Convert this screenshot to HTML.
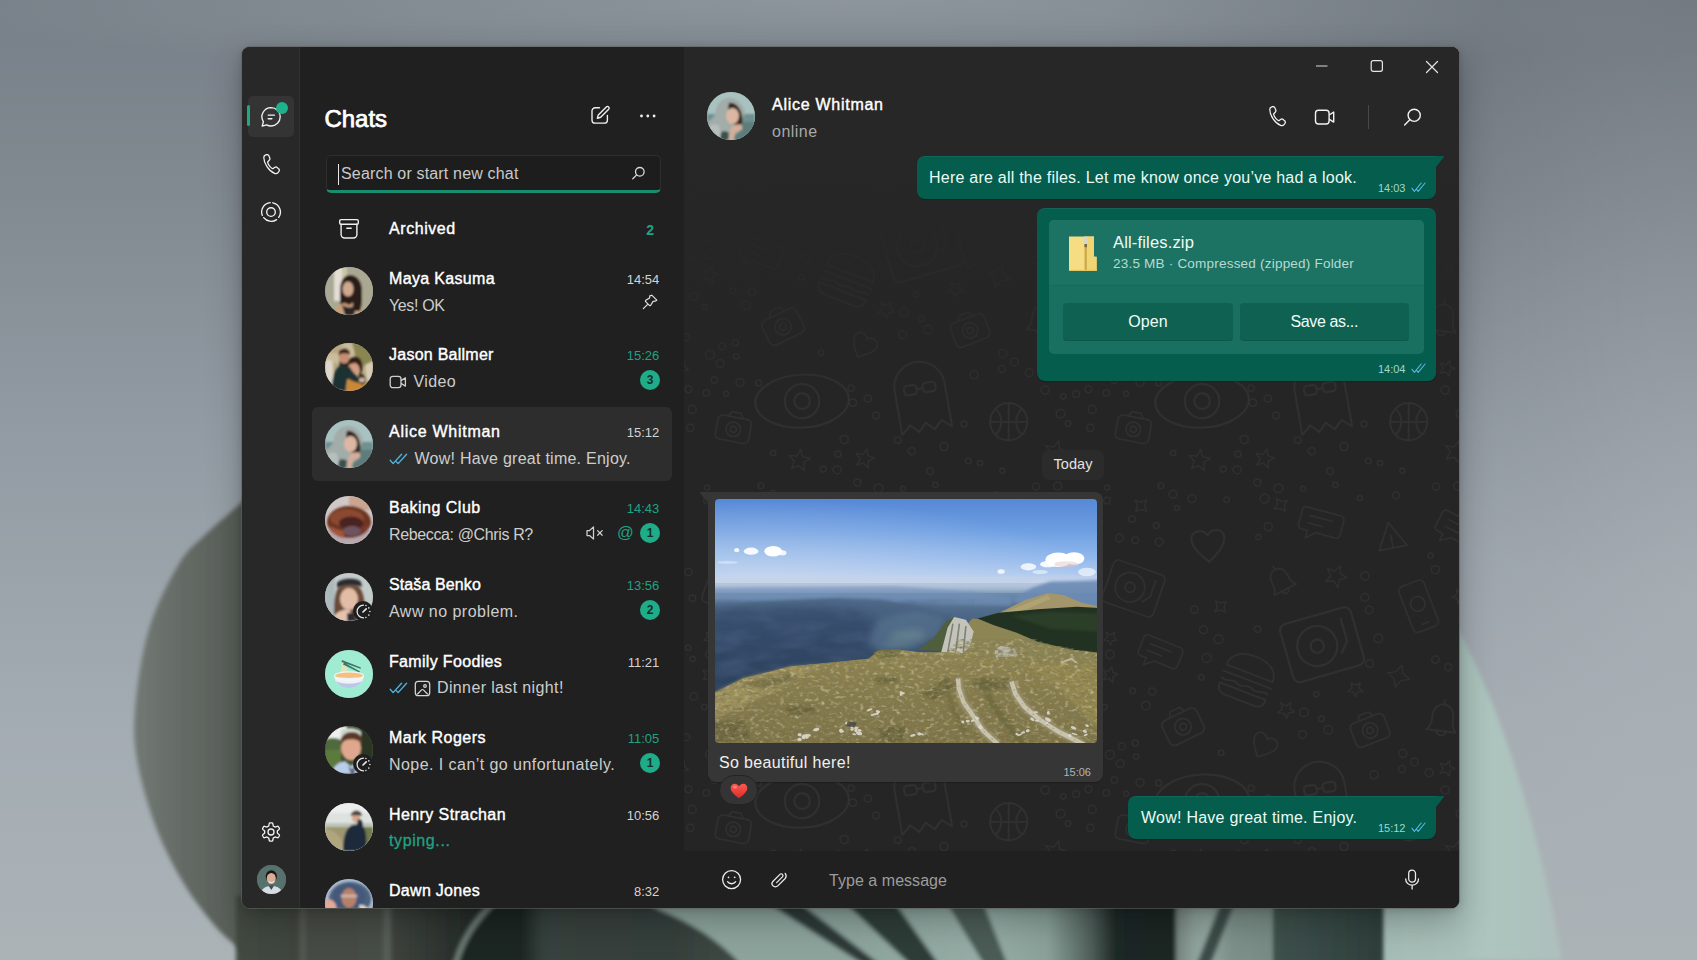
<!DOCTYPE html>
<html>
<head>
<meta charset="utf-8">
<title>WhatsApp</title>
<style>
*{box-sizing:border-box;margin:0;padding:0}
html,body{width:1697px;height:960px;overflow:hidden;background:#868e95;font-family:"Liberation Sans",sans-serif;}
body{position:relative}
#wall{position:absolute;left:0;top:0;width:1697px;height:960px}
#win{position:absolute;left:242px;top:47px;width:1217px;height:861px;border-radius:8px;overflow:hidden;background:#202020;box-shadow:0 0 0 1px rgba(96,100,97,.6),0 14px 34px rgba(0,0,0,.26),0 2px 10px rgba(0,0,0,.16)}
.abs{position:absolute}
/* nav rail */
#rail{position:absolute;left:0;top:0;width:58px;height:861px;background:#282828;border-right:1px solid #313131}
#rail .sel{position:absolute;left:6px;top:49px;width:46px;height:41px;border-radius:5px;background:#343434}
#rail .bar{position:absolute;left:5px;top:58px;width:3px;height:21px;border-radius:2px;background:#1fa884}
#rail .dot{position:absolute;left:34px;top:55px;width:12px;height:12px;border-radius:50%;background:#1fb08c}
#rail svg{position:absolute}
/* chat list */
#list{position:absolute;left:58px;top:0;width:384px;height:861px;background:#202020}
#list h1{position:absolute;left:24.500px;top:56.500px;font-size:24px;line-height:30px;font-weight:normal;-webkit-text-stroke:.75px #fff;color:#fff}
#search{position:absolute;left:26px;top:108px;width:334.500px;height:38px;border-radius:5px;background:#1d1d1d;border:1px solid #2e2e2e;border-bottom:3px solid #1a8d71;overflow:hidden}
#search .ph{position:absolute;left:14px;top:7px;font-size:16px;line-height:22px;color:#c9c9c9}
#search .caret{position:absolute;left:11px;top:8px;width:1px;height:21px;background:#e8e8e8}
.row{position:absolute;left:0;width:384px;height:74px}
.row.on::before{content:"";position:absolute;left:12px;top:0;width:360px;height:74px;border-radius:6px;background:#2d2d2d}
.av{position:absolute;left:25px;top:13px;width:48px;height:48px;border-radius:50%;overflow:hidden;background:#777}
.av svg{display:block;width:48px;height:48px}
.nm{position:absolute;left:89px;top:14px;font-size:16px;line-height:22px;font-weight:normal;-webkit-text-stroke:.4px #fff;letter-spacing:.55px;color:#fff;white-space:nowrap}
.ms{position:absolute;left:89px;top:40.800px;font-size:16px;line-height:22px;color:#cdcdcd;white-space:nowrap}
.ms .g{-webkit-text-stroke:.3px #1fa383}
.tm{position:absolute;right:24.700px;top:16px;font-size:13px;line-height:20px;color:#d4d4d4;white-space:nowrap}
.tm.g,.g{color:#1fa383}
.bd{position:absolute;left:340px;top:40px;width:20px;height:20px;border-radius:50%;background:#1fad89;color:#14302a;font-size:12px;line-height:20px;font-weight:bold;text-align:center}
/* chat pane */
#pane{position:absolute;left:442px;top:0;width:775px;height:861px;background:#262626}
#hdr{position:absolute;left:0;top:0;width:775px;height:105px;background:#272727}
#comp{position:absolute;left:0;top:804px;width:775px;height:57px;background:#202020}
.out{position:absolute;background:#045d4d;box-shadow:inset 0 1px 0 rgba(255,255,255,.06),0 1px 1px rgba(0,0,0,.2);border-radius:8px;color:#eafaf5}
.in{position:absolute;background:#363636;border-radius:8px;color:#f0f0f0}
.meta{position:absolute;font-size:11px;line-height:14px;letter-spacing:-.05px;color:#a3d5c8;white-space:nowrap}
.ms svg{position:absolute;left:0}
.ms .chk{top:5px;left:0}
.ms .vid{top:4px;left:0}
.ms .img{top:3px;left:25px}
.tmr{position:absolute;left:53px;top:41.200px;width:20px;height:20px;border-radius:50%;background:#1e1e1e}
.tmr svg{position:absolute;left:1.500px;top:1.500px}
</style>
</head>
<body>
<svg id="wall" width="1697" height="960" viewBox="0 0 1697 960">
<defs>
<linearGradient id="wg" x1="0" y1="0" x2="0" y2="1"><stop offset="0" stop-color="#777f88"/><stop offset=".2" stop-color="#818991"/><stop offset=".45" stop-color="#929ba3"/><stop offset=".75" stop-color="#a3acb2"/><stop offset="1" stop-color="#abb3b7"/></linearGradient>
<radialGradient id="wtop" cx=".5" cy="0" r=".55" gradientTransform="matrix(1 0 0 .35 0 0)"><stop offset="0" stop-color="#969ea4" stop-opacity=".75"/><stop offset="1" stop-color="#969ea4" stop-opacity="0"/></radialGradient>
<radialGradient id="wr" cx="1" cy="0" r="1" gradientTransform="matrix(1 0 0 .62 0 0)"><stop offset="0" stop-color="#5c636b" stop-opacity=".5"/><stop offset="1" stop-color="#5c636b" stop-opacity="0"/></radialGradient><radialGradient id="wr2" cx="1" cy=".62" r=".8"><stop offset="0" stop-color="#aeb3b8" stop-opacity=".55"/><stop offset="1" stop-color="#aeb3b8" stop-opacity="0"/></radialGradient>
<linearGradient id="pl" x1="0" y1="0" x2="1" y2="0"><stop offset="0" stop-color="#727974"/><stop offset=".3" stop-color="#626862"/><stop offset=".62" stop-color="#535952"/><stop offset="1" stop-color="#424841"/></linearGradient>
<linearGradient id="pr" x1="0" y1="0" x2="1" y2="0"><stop offset="0" stop-color="#9db6af"/><stop offset=".6" stop-color="#adc5be"/><stop offset="1" stop-color="#aebfbc"/></linearGradient>
<linearGradient id="btA" gradientUnits="userSpaceOnUse" x1="236" y1="0" x2="1466" y2="0">
<stop offset="0" stop-color="#434941"/><stop offset=".05" stop-color="#3f453e"/><stop offset=".054" stop-color="#585f57"/><stop offset=".058" stop-color="#464c45"/><stop offset=".118" stop-color="#474d46"/><stop offset=".123" stop-color="#5f665e"/><stop offset=".128" stop-color="#3d433d"/><stop offset=".18" stop-color="#2a302d"/><stop offset=".23" stop-color="#1c2421"/><stop offset=".25" stop-color="#36423e"/>
<stop offset=".33" stop-color="#3f4b47"/><stop offset=".345" stop-color="#8ea59e"/><stop offset=".5" stop-color="#8da49d"/><stop offset=".61" stop-color="#95ada6"/><stop offset=".66" stop-color="#8aa19a"/><stop offset=".695" stop-color="#50605b"/><stop offset=".715" stop-color="#1f2926"/><stop offset=".763" stop-color="#1c2623"/><stop offset=".765" stop-color="#76867f"/><stop offset=".78" stop-color="#8fa39c"/><stop offset=".79" stop-color="#93a8a0"/><stop offset=".81" stop-color="#7d918a"/><stop offset=".842" stop-color="#788c85"/><stop offset=".846" stop-color="#3d504b"/><stop offset=".93" stop-color="#2f3f3b"/><stop offset=".934" stop-color="#a5bdb6"/><stop offset="1" stop-color="#a8c0b9"/></linearGradient>
<linearGradient id="btD" x1="0" y1="0" x2="1" y2="0"><stop offset="0" stop-color="#38423e"/><stop offset=".6" stop-color="#36403c"/><stop offset="1" stop-color="#3f4a46"/></linearGradient>
<linearGradient id="btG" x1="0" y1="0" x2="1" y2="0"><stop offset="0" stop-color="#3f524d"/><stop offset="1" stop-color="#2e3f3b"/></linearGradient>
<filter id="bl" x="-5%" y="-5%" width="110%" height="110%"><feGaussianBlur stdDeviation="2.2"/></filter>
</defs>
<rect width="1697" height="960" fill="url(#wg)"/>
<rect width="1697" height="400" fill="url(#wtop)"/>
<rect x="1100" width="597" height="960" fill="url(#wr)"/><rect x="1300" width="397" height="960" fill="url(#wr2)"/>

<path filter="url(#bl)" d="M1440 600 C1480 660 1530 780 1562 960 L1380 960 L1380 600Z" fill="url(#pr)"/>

<path filter="url(#bl)" d="M275.0 470.0C269.5 475.3 253.7 491.2 242.0 502.0C230.3 512.8 215.6 524.6 205.0 535.0C194.4 545.4 187.9 548.8 178.6 564.5C169.3 580.2 156.3 604.8 149.0 629.0C141.7 653.2 136.8 687.3 135.0 710.0C133.2 732.7 134.3 745.0 138.0 765.0C141.7 785.0 149.3 810.2 157.0 830.0C164.7 849.8 174.2 867.8 184.0 884.0C193.8 900.2 206.3 915.8 216.0 927.0C225.7 938.2 234.3 943.5 242.0 951.0C249.7 958.5 258.7 968.5 262.0 972.0L330 972L330 470Z" fill="url(#pl)"/>

<g filter="url(#bl)">
<rect x="236" y="896" width="1230" height="70" fill="url(#btA)"/>
<path d="M640 896 L655 908 C690 922 720 940 742 966 L560 966 L560 896Z" fill="url(#btD)"/>
<path d="M455 966 C462 940 474 922 496 900 L520 900 L520 966Z" fill="#1d2522"/>
<path d="M455 966 C462 940 474 922 494 902" stroke="#71807a" stroke-width="5" fill="none"/>
<path d="M763 900L796 900L882 966L866 966Z" fill="#2d3b37"/>
<path d="M842 900L893 900L940 966L912 966Z" fill="#2e3c39"/>
<path d="M945 900L982 900L1008 966L985 966Z" fill="#4b5c57"/>
<path d="M1236 900L1222 900L1196 966L1210 966Z" fill="#3c4d48"/>
</g>
<path filter="url(#bl)" d="M1382 900 L1382 966 L1275 966 L1275 900Z" fill="url(#btG)"/>
</svg>


<div id="win">
<div id="rail">
<div class="sel"></div><div class="bar"></div>
<svg style="left:18px;top:59px" width="22" height="22" viewBox="0 0 22 22" fill="none" stroke="#f2f2f2" stroke-width="1.35" stroke-linecap="round" stroke-linejoin="round"><path d="M11 1.6a9.2 9.2 0 0 1 0 18.4c-1.6 0-3.1-.4-4.4-1.1L2.2 20.1l1.2-4.3A9.2 9.2 0 0 1 11 1.600z"/><path d="M8.200 9.1h6.300M8.200 12.700h3.700"/></svg>
<div class="dot"></div>
<svg style="left:19.800px;top:107px" width="20" height="22" viewBox="0 0 20 22" fill="none" stroke="#f2f2f2" stroke-width="1.35" stroke-linecap="round" stroke-linejoin="round"><path d="M5.300 1.700l1.300-.4c1-.3 2 .2 2.500 1.200l.9 2.200c.4.900.2 1.900-.5 2.600L8 8.800c-.2.200-.3.500-.2.800.3 1.300 1 2.600 2.100 3.900 1 1.300 2.100 2.200 3.100 2.700.3.100.6.100.8-.1l1.700-1.200c.8-.5 1.800-.5 2.500.1l1.600 1.500c.8.700.9 1.900.3 2.800l-.7 1c-.9 1.200-2.500 1.700-3.900 1.100-3-1.200-5.700-3.600-8.100-7.100C4.800 10.800 3.600 7.400 3.700 4.100c0-1.100.7-2 1.600-2.400z" transform="translate(-1.600 -.5) scale(.93)"/></svg>
<svg style="left:18px;top:154px" width="22" height="22" viewBox="0 0 22 22" fill="none" stroke="#f2f2f2" stroke-width="1.35" stroke-linecap="round"><circle cx="11" cy="11" r="4.300"/><path d="M12.800 1.800a9.400 9.400 0 0 1 5.900 14.600M16.600 18.600a9.400 9.400 0 0 1-12.900-2M2.300 14.400A9.400 9.400 0 0 1 10.200 1.600"/></svg>
<svg style="left:18px;top:773.600px" width="22" height="22" viewBox="0 0 22 22" fill="none" stroke="#f2f2f2" stroke-width="1.300" stroke-linejoin="round"><circle cx="11" cy="11" r="3"/><path d="M11.00 1.90L11.48 1.91L11.95 1.95L12.42 2.01L12.78 2.64L13.01 3.51L13.15 4.38L13.29 5.03L13.60 5.15L13.91 5.30L14.20 5.46L14.49 5.63L14.76 5.82L15.03 6.03L15.66 5.83L16.48 5.52L17.35 5.28L18.07 5.27L18.36 5.65L18.63 6.04L18.88 6.45L19.11 6.87L19.31 7.30L19.50 7.74L19.12 8.36L18.49 8.99L17.81 9.55L17.32 10.00L17.36 10.33L17.39 10.67L17.40 11.00L17.39 11.33L17.36 11.67L17.32 12.00L17.81 12.45L18.49 13.01L19.12 13.64L19.50 14.26L19.31 14.70L19.11 15.13L18.88 15.55L18.63 15.96L18.36 16.35L18.07 16.73L17.35 16.72L16.48 16.48L15.66 16.17L15.03 15.97L14.76 16.18L14.49 16.37L14.20 16.54L13.91 16.70L13.60 16.85L13.29 16.97L13.15 17.62L13.01 18.49L12.78 19.36L12.42 19.99L11.95 20.05L11.48 20.09L11.00 20.10L10.52 20.09L10.05 20.05L9.58 19.99L9.22 19.36L8.99 18.49L8.85 17.62L8.71 16.97L8.40 16.85L8.09 16.70L7.80 16.54L7.51 16.37L7.24 16.18L6.97 15.97L6.34 16.17L5.52 16.48L4.65 16.72L3.93 16.73L3.64 16.35L3.37 15.96L3.12 15.55L2.89 15.13L2.69 14.70L2.50 14.26L2.88 13.64L3.51 13.01L4.19 12.45L4.68 12.00L4.64 11.67L4.61 11.33L4.60 11.00L4.61 10.67L4.64 10.33L4.68 10.00L4.19 9.55L3.51 8.99L2.88 8.36L2.50 7.74L2.69 7.30L2.89 6.87L3.12 6.45L3.37 6.04L3.64 5.65L3.93 5.27L4.65 5.28L5.52 5.52L6.34 5.83L6.97 6.03L7.24 5.82L7.51 5.63L7.80 5.46L8.09 5.30L8.40 5.15L8.71 5.03L8.85 4.38L8.99 3.51L9.22 2.64L9.58 2.01L10.05 1.95L10.52 1.91z"/></svg>
<div class="abs" style="left:14.500px;top:818px;width:29px;height:29px;border-radius:50%;overflow:hidden;background:#56706b"><svg style="left:0;top:0" width="29" height="29" viewBox="0 0 29 29"><defs><filter id="fp" x="-10%" y="-10%" width="120%" height="120%"><feGaussianBlur stdDeviation=".5"/></filter></defs><rect width="29" height="29" fill="#57716c"/><g filter="url(#fp)"><ellipse cx="14.300" cy="11.500" rx="5.600" ry="6.200" fill="#1d1816"/><ellipse cx="14.300" cy="13.500" rx="4.500" ry="5.600" fill="#d8ae96"/><path d="M3.500 29c1-5.500 5-8 11-8s10 2.500 11 8z" fill="#d5dde2"/><path d="M11.500 20.500l2.800 4.500 2.800-4.500z" fill="#454954"/><path d="M11.800 16.500c1.500 1.500 3.500 1.500 5 0" stroke="#fff" stroke-width=".9" fill="none"/></g></svg></div>

</div>

<div id="list">
<h1><span style="letter-spacing:-0.041px">Chats</span></h1>
<svg class="abs" style="left:289px;top:57px" width="22" height="22" viewBox="0 0 22 22" fill="none" stroke="#f0f0f0" stroke-width="1.400" stroke-linecap="round" stroke-linejoin="round"><path d="M10.500 3.700H6.200A3.200 3.200 0 0 0 3 6.900v9a3.200 3.200 0 0 0 3.200 3.200h9a3.200 3.200 0 0 0 3.200-3.200v-4.400"/><path d="M17.300 2.900a1.700 1.700 0 0 1 2.400 2.400l-8 8-3.300.9.900-3.300z"/></svg>
<svg class="abs" style="left:338px;top:66px" width="18" height="6" viewBox="0 0 18 6" fill="#f0f0f0"><circle cx="3.500" cy="3" r="1.400"/><circle cx="9.800" cy="3" r="1.400"/><circle cx="16.100" cy="3" r="1.400"/></svg>
<div id="search"><div class="caret"></div><div class="ph"><span style="letter-spacing:0.17px">Search or start new chat</span></div><svg class="abs" style="left:302px;top:8px" width="18" height="18" viewBox="0 0 18 18" fill="none" stroke="#d8d8d8" stroke-width="1.300" stroke-linecap="round"><circle cx="10.800" cy="7.800" r="4.300"/><path d="M7.700 10.900L3.800 14.800"/></svg></div>
<svg class="abs" style="left:38px;top:171px" width="22" height="22" viewBox="0 0 22 22" fill="none" stroke="#f0f0f0" stroke-width="1.400" stroke-linejoin="round" stroke-linecap="round"><rect x="1.700" y="1.600" width="18.600" height="4.600" rx="1.300"/><path d="M3.100 6.200v10.300a3.500 3.500 0 0 0 3.500 3.500h8.800a3.500 3.500 0 0 0 3.500-3.500V6.200"/><path d="M8.800 10.300h4.400"/></svg>
<div class="nm" style="top:171px"><span style="letter-spacing:0.568px">Archived</span></div>
<div class="abs g" style="right:30px;top:173px;font-size:14px;line-height:20px;font-weight:bold">2</div>
<div class="row" style="top:206.8px">
<div class="av"><svg viewBox="0 0 48 48"><defs><filter id="fa" x="-10%" y="-10%" width="120%" height="120%"><feGaussianBlur stdDeviation="1.100"/></filter></defs><rect width="48" height="48" fill="#a9a995"/><g filter="url(#fa)"><rect x="9" y="0" width="8" height="34" fill="#e3ddd6"/><rect x="17" y="0" width="5" height="20" fill="#c9c7a8"/><rect x="22" y="0" width="26" height="48" fill="#aaa792"/><path d="M15 24c0-10 4-16 10-16s12 5 12 16c0 7 0 14-2 20H16c-1-6-1-13-1-20z" fill="#2b1c18"/><ellipse cx="23" cy="22" rx="5.500" ry="7.500" fill="#cfa88e"/><path d="M8 48c1-7 6-11 12-12l4 2 5-3c3 2 7 5 8 13z" fill="#c79f7c"/><path d="M28 24c1 6 1 14-2 20h9c2-6 2-14 1-22z" fill="#2a1a16"/><path d="M17 38l3 10h9l2-9c-3 2-10 2-14-1z" fill="#2a2228"/></g></svg></div>
<div class="nm"><span style="letter-spacing:0.338px">Maya Kasuma</span></div>
<div class="tm">14:54</div>
<div class="ms"><span style="letter-spacing:-0.373px">Yes! OK</span></div>
<svg class="abs" style="left:341px;top:39px" width="18" height="18" viewBox="0 0 18 18" fill="none" stroke="#e2e2e2" stroke-width="1.200" stroke-linejoin="round" stroke-linecap="round"><path d="M10.800 2.200l5 5-1.700 1-2 .2-2.400 3.900-1.100.3-4.200-4.200.3-1.100 3.900-2.400.2-2zM6.400 11.600L2.300 15.700"/></svg>
</div>
<div class="row" style="top:283.4px">
<div class="av"><svg viewBox="0 0 48 48"><rect width="48" height="48" fill="#b9a983"/><g filter="url(#fa)"><path d="M0 10h14l4-10h12l-2 20H0z" fill="#cbbd9b"/><path d="M0 18c4-2 7-1 8 3v20H0z" fill="#ddd6ca"/><path d="M27 0h21v20l-6 6-10-8z" fill="#8a8651"/><path d="M34 2c5 1 10 5 14 12V0H34z" fill="#5f6a3a"/><path d="M40 22l8-4v16l-6 4z" fill="#d7cdb6"/><ellipse cx="19" cy="14.500" rx="5.300" ry="6.500" fill="#c58f74"/><path d="M13.500 12.500c0-4.500 2.500-7 6-7s6 2.500 5.500 6.500c-2-2-8-3-11.500.5z" fill="#40241a"/><path d="M14 17.500c2 3.500 8 4 10.500.5l-1 7h-8.500z" fill="#2e1e1a"/><ellipse cx="29" cy="24.500" rx="5.600" ry="6.800" fill="#d39d82"/><path d="M22.500 23c0-6.500 3-9.500 7.500-9.500s7.500 4 7.500 10.500c0 3-1 6-3 8 1-5 0-10-4-12-3 0-5.500 1-8 3z" fill="#331e18"/><path d="M7 46c0-13 3-22 10-24l8 2c2 5 9 12 16 14l-2 6c-7-1-13-4-17-8l-1 12z" fill="#1b3033"/><path d="M21 48c0-8 2-14 6-17 4 2 8 2 10-1 3 3 4 10 3 18z" fill="#c98838"/><path d="M22 35c4 3 10 5 17 6l2-4c-6-1-12-5-16-10z" fill="#1d3335"/><path d="M34 30c3 0 7 3 7 8l-4 4c-2-3-4-8-3-12z" fill="#2a332d"/><ellipse cx="37" cy="37" rx="3" ry="2.200" fill="#d9b7a3"/></g></svg></div>
<div class="nm"><span style="letter-spacing:0.248px">Jason Ballmer</span></div>
<div class="tm g">15:26</div>
<div class="ms"><svg class="vid" width="18" height="14" viewBox="0 0 18 14" fill="none" stroke="#cfcfcf" stroke-width="1.300" stroke-linejoin="round"><rect x="1.200" y="1.300" width="10.800" height="11.400" rx="2.600"/><path d="M12 5.600l4.400-2.700v8.200L12 8.400"/></svg><span style="margin-left:24.500px"><span style="letter-spacing:0.392px">Video</span></span></div>
<div class="bd">3</div>
</div>
<div class="row on" style="top:359.9px">
<div class="av"><svg viewBox="0 0 48 48"><rect width="48" height="48" fill="#a7c2c0"/><g filter="url(#fa)"><rect y="22" width="48" height="26" fill="#6f9190"/><rect y="30" width="48" height="18" fill="#5d7d7c"/><path d="M0 30c6-3 8-6 9-12C11 10 16 6 23 6c8 0 13 7 15 14l-6 20-12 8H0z" fill="#a2aca9"/><path d="M2 34c4-2 8-2 10 0l4 14H0z" fill="#b5bfbd"/><path d="M22 11c5-1 10 3 12 9 2 5 2 10 0 14l-8-2-4-10c-1-4-1-8 0-11z" fill="#33241e"/><ellipse cx="25.500" cy="24" rx="6.500" ry="8" fill="#dcb7a2"/><path d="M22 48l2-12c2-3 8-5 11-3v5l-7 2-1 8z" fill="#d5ae9a"/><path d="M14 40c2-1 6-1 8 1l-1 7h-8z" fill="#3d4f4c"/></g></svg></div>
<div class="nm"><span style="letter-spacing:0.726px">Alice Whitman</span></div>
<div class="tm">15:12</div>
<div class="ms"><svg class="chk" width="21" height="12" viewBox="0 0 21 12" fill="none" stroke="#4fb6e0" stroke-width="1.35" stroke-linecap="round" stroke-linejoin="round"><path d="M1.200 7.300l2.900 3.300L12.600 1.200M7.300 8.600l1.800 2L17.600 1.200"/></svg><span style="margin-left:25.500px"><span style="letter-spacing:0.251px">Wow! Have great time. Enjoy.</span></span></div>
</div>
<div class="row" style="top:436.4px">
<div class="av"><svg viewBox="0 0 48 48"><rect width="48" height="48" fill="#cfc8c6"/><g filter="url(#fa)"><rect x="24" y="0" width="24" height="14" fill="#c9a592"/><rect x="0" y="34" width="48" height="14" fill="#b7a8ad"/><ellipse cx="24" cy="26" rx="22" ry="16" fill="#6d3423"/><ellipse cx="22" cy="22" rx="17" ry="9" fill="#8b4a30"/><ellipse cx="26" cy="27" rx="12" ry="6.500" fill="#4a2320"/><ellipse cx="27" cy="35" rx="9" ry="5" fill="#6d5460"/><path d="M4 30c3 8 10 12 16 12l-2-7c-5-1-9-3-14-5z" fill="#a3563a"/><path d="M36 38c5-2 9-6 10-11l-8 4z" fill="#7c3a2a"/></g></svg></div>
<div class="nm"><span style="letter-spacing:0.493px">Baking Club</span></div>
<div class="tm g">14:43</div>
<div class="ms"><span style="letter-spacing:-0.368px">Rebecca: @Chris R?</span></div>
<div class="bd">1</div>
<svg class="abs" style="left:285px;top:41px" width="20" height="18" viewBox="0 0 20 18" fill="none" stroke="#d0d0d0" stroke-width="1.250" stroke-linejoin="round" stroke-linecap="round"><path d="M2 6.500h2.600l3.900-3.600v12.200L4.600 11.500H2z"/><path d="M12.600 6.600l4.600 4.600M17.200 6.600l-4.600 4.600"/></svg>
<div class="abs g" style="left:317px;top:38px;font-size:16.500px;line-height:22px">@</div>
</div>
<div class="row" style="top:513.0px">
<div class="av"><svg viewBox="0 0 48 48"><rect width="48" height="48" fill="#c3cbcb"/><g filter="url(#fa)"><rect x="0" y="0" width="10" height="48" fill="#aeb9bb"/><path d="M9 40c0-16 1-30 15-30s16 14 16 32l-6 6H12z" fill="#6a4c38"/><ellipse cx="24" cy="26" rx="9" ry="11" fill="#e2bca6"/><path d="M12 10c3-5 20-6 24-1l1 5c-6-3-20-3-25 1z" fill="#2c2c33"/><path d="M14 16c3-4 16-5 21-1-5-1-16-1-21 1z" fill="#7b5a44"/><path d="M10 42c3-4 9-6 14-5l3 4-2 7H10z" fill="#e6c3ae"/><path d="M22 40h8v8h-8z" fill="#2b2b30"/></g></svg></div>
<div class="tmr"><svg width="17" height="17" viewBox="0 0 17 17" fill="none" stroke="#e6e6e6" stroke-width="1.250" stroke-linecap="round"><path d="M8.500 2.100A6.400 6.400 0 0 0 8.500 14.900"/><circle cx="10.90" cy="2.57" r=".8" fill="#e6e6e6" stroke="none"/><circle cx="13.81" cy="4.92" r=".8" fill="#e6e6e6" stroke="none"/><circle cx="14.90" cy="8.50" r=".8" fill="#e6e6e6" stroke="none"/><circle cx="13.81" cy="12.08" r=".8" fill="#e6e6e6" stroke="none"/><circle cx="10.90" cy="14.43" r=".8" fill="#e6e6e6" stroke="none"/><path d="M8 9l3.200-3.200" stroke-width="1.700"/></svg></div>
<div class="nm"><span style="letter-spacing:0.106px">Staša Benko</span></div>
<div class="tm g">13:56</div>
<div class="ms"><span style="letter-spacing:0.471px">Aww no problem.</span></div>
<div class="bd">2</div>
</div>
<div class="row" style="top:589.6px">
<div class="av"><svg viewBox="0 0 48 48"><rect width="48" height="48" fill="#a0ecd3"/><path d="M17 11l5 0 1 14h-8z" fill="#e0e6b8" opacity=".9"/><path d="M17 10l19 7.500-.5 1.200L16.500 12z M19 12.500l16 9-.7 1.100L18 14.500z" fill="#3e7668"/><ellipse cx="24" cy="26" rx="14.500" ry="4.200" fill="#f2c27c"/><path d="M9.500 26c0 7 6 12 14.500 12s14.500-5 14.500-12c-3 2.500-26 2.500-29 0z" fill="#eef2f8"/><path d="M11 31c2 4.500 7 7 13 7s11-2.500 13-7c-5 3.500-21 3.500-26 0z" fill="#b9c8e6"/><ellipse cx="24" cy="26" rx="14.500" ry="4.200" fill="none" stroke="#f4f6fa" stroke-width="1.200"/></svg></div>
<div class="nm"><span style="letter-spacing:0.329px">Family Foodies</span></div>
<div class="tm">11:21</div>
<div class="ms"><svg class="chk" width="21" height="12" viewBox="0 0 21 12" fill="none" stroke="#4fb6e0" stroke-width="1.35" stroke-linecap="round" stroke-linejoin="round"><path d="M1.200 7.300l2.900 3.300L12.600 1.200M7.300 8.600l1.800 2L17.600 1.200"/></svg><svg class="img" width="17" height="17" viewBox="0 0 17 17" fill="none" stroke="#d6d6d6" stroke-width="1.250" stroke-linejoin="round"><rect x="1.300" y="1.300" width="14.400" height="14.400" rx="3"/><circle cx="11" cy="6" r="1.300"/><path d="M3.300 14.300l4.300-4.400c.5-.5 1.300-.5 1.800 0l4.300 4.400"/></svg><span style="margin-left:48px"><span style="letter-spacing:0.369px">Dinner last night!</span></span></div>
</div>
<div class="row" style="top:666.1px">
<div class="av"><svg viewBox="0 0 48 48"><rect width="48" height="48" fill="#3f4d2c"/><g filter="url(#fa)"><path d="M0 0h22v16H0z" fill="#eef0ee"/><path d="M0 14c6-3 12-2 16 0v12H0z" fill="#4f6a3d"/><path d="M0 24h16v24H0z" fill="#5d7a3e"/><path d="M34 0h14v48H36z" fill="#2c3424"/><path d="M16 4c4-3 16-3 20 2v10H15z" fill="#cfd6d0"/><ellipse cx="26" cy="22" rx="10" ry="12.500" fill="#dfa88e"/><path d="M15 19c0-9 5-13 12-13s11 4 10 12c-3-5-15-7-20-1z" fill="#5a3826"/><path d="M6 48c2-8 8-12 14-13l6 5 6-5c6 1 10 6 11 13z" fill="#b9cdea"/><path d="M23 40l3 8h3l2-8-4 3z" fill="#5a6480"/></g></svg></div>
<div class="tmr"><svg width="17" height="17" viewBox="0 0 17 17" fill="none" stroke="#e6e6e6" stroke-width="1.250" stroke-linecap="round"><path d="M8.500 2.100A6.400 6.400 0 0 0 8.500 14.900"/><circle cx="10.90" cy="2.57" r=".8" fill="#e6e6e6" stroke="none"/><circle cx="13.81" cy="4.92" r=".8" fill="#e6e6e6" stroke="none"/><circle cx="14.90" cy="8.50" r=".8" fill="#e6e6e6" stroke="none"/><circle cx="13.81" cy="12.08" r=".8" fill="#e6e6e6" stroke="none"/><circle cx="10.90" cy="14.43" r=".8" fill="#e6e6e6" stroke="none"/><path d="M8 9l3.200-3.200" stroke-width="1.700"/></svg></div>
<div class="nm"><span style="letter-spacing:0.492px">Mark Rogers</span></div>
<div class="tm g">11:05</div>
<div class="ms"><span style="letter-spacing:0.446px">Nope. I can’t go unfortunately.</span></div>
<div class="bd">1</div>
</div>
<div class="row" style="top:742.7px">
<div class="av"><svg viewBox="0 0 48 48"><rect width="48" height="48" fill="#dfe3df"/><g filter="url(#fa)"><rect y="0" width="48" height="10" fill="#eceeed"/><rect y="20" width="48" height="4" fill="#bfc5bb"/><path d="M0 24h48v24H0z" fill="#9d9670"/><path d="M0 26c6 0 12 4 16 10l4 12H0z" fill="#b0a67e"/><path d="M36 24h12v16H36z" fill="#6f7b4a"/><ellipse cx="31" cy="14.500" rx="4.200" ry="5" fill="#d5a78f"/><path d="M25.500 12c1-3.500 4-5 7-4.500 3 .5 4.500 2.500 4.500 5l-11.500-.2z" fill="#4a4440"/><path d="M18 48c0-12 2-22 9-26l9-1c5 3 6 14 5 27z" fill="#1b2a3b"/><path d="M33 16c3 0 5 3 5 7l-6-1z" fill="#202a36"/></g></svg></div>
<div class="nm"><span style="letter-spacing:0.416px">Henry Strachan</span></div>
<div class="tm">10:56</div>
<div class="ms"><span class="g"><span style="letter-spacing:0.608px">typing...</span></span></div>
</div>
<div class="row" style="top:819.2px">
<div class="av"><svg viewBox="0 0 48 48"><rect width="48" height="48" fill="#a9b9cf"/><g filter="url(#fa)"><ellipse cx="25" cy="20" rx="21" ry="17" fill="#4b627e"/><ellipse cx="24" cy="18" rx="16" ry="13" fill="#44597a"/><ellipse cx="24" cy="19" rx="7.500" ry="10" fill="#b88069"/><path d="M15.500 15.500h17v3h-17z" fill="#dfe3e6" opacity=".5"/><path d="M0 22c4-3 9-1 11 4l2 14H0z" fill="#e4a898"/><path d="M9 30h30v12H9z" fill="#c08c7a"/><path d="M34 26c3-1 8 1 10 5v9H36z" fill="#d8d4d0"/></g></svg></div>
<div class="nm"><span style="letter-spacing:0.295px">Dawn Jones</span></div>
<div class="tm">8:32</div>
</div>
</div>
<div id="pane">
<svg class="abs" style="left:0;top:0" width="775" height="861"><defs><pattern id="dd" width="400" height="400" patternUnits="userSpaceOnUse" patternTransform="translate(14 30)"><g fill="none" stroke="#303030" stroke-width="1.250" stroke-linecap="round" stroke-linejoin="round"><g transform="translate(85.1 249.7) rotate(-26) scale(1.36)"><rect x="-14" y="-10" width="28" height="20" rx="4"/><circle r="6"/><circle r="2.500"/><path d="M-6-10l2-4h8l2 4"/></g><g transform="translate(110.4 70.0) rotate(-4) scale(1.65)"><path d="M0 9C-7 3-10-1-10-5c0-3 2-5 5-5 2 0 4 1 5 3 1-2 3-3 5-3 3 0 5 2 5 5 0 4-3 8-10 14z"/></g><g transform="translate(62.6 174.7) rotate(22) scale(1.23)"><path d="M-14-9h28a3 3 0 0 1 3 3v12a3 3 0 0 1-3 3H-2l-7 6v-6h-5a3 3 0 0 1-3-3V-6a3 3 0 0 1 3-3z"/><path d="M-10-3h18M-10 3h12"/></g><g transform="translate(344.5 242.2) rotate(7) scale(1.48)"><path d="M-10 8c3-3 3-6 3-10 0-5 3-8 7-8s7 3 7 8c0 4 0 7 3 10z"/><path d="M-3 8a3 3 0 0 0 6 0M0-10v-3"/></g><g transform="translate(224.1 167.7) rotate(-16) scale(1.67)"><rect x="-22" y="-18" width="44" height="36" rx="4"/><circle r="12" cx="-3"/><circle r="4" cx="-3"/><path d="M15-12v14l-5 6"/></g><g transform="translate(320.6 129.2) rotate(-21) scale(1.22)"><rect x="-11" y="-20" width="22" height="40" rx="4"/><circle r="6" cy="-2"/><path d="M-3 15h6"/></g><g transform="translate(293.2 60.8) rotate(-11) scale(1.29)"><path d="M0-12l11 20h-22z"/><path d="M0 8V-2"/></g><g transform="translate(223.2 319.3) rotate(-10) scale(1.58)"><path d="M-16 22V-6a16 16 0 0 1 32 0v28l-6-5-5 5-5-5-5 5-5-5z"/><rect x="-10" y="-8" width="8" height="6" rx="2"/><rect x="2" y="-8" width="8" height="6" rx="2"/><path d="M-2-5h4"/></g><g transform="translate(150.7 198.9) rotate(21) scale(1.37)"><path d="M-18-2c0-9 8-13 18-13s18 4 18 13z"/><path d="M-19 3h38M-18 8c4 3 8-3 12 0s8-3 12 0 8-3 12 0"/><path d="M-18 12h36c0 5-3 7-7 7h-22c-4 0-7-2-7-7z"/></g><g transform="translate(310.7 344.8) rotate(0) scale(1.43)"><circle r="13"/><path d="M-13 0h26M0-13v26M-9-9c5 5 5 13 0 18M9-9c-5 5-5 13 0 18"/></g><g transform="translate(104.1 324.1) rotate(-3) scale(1.56)"><ellipse rx="30" ry="17"/><circle r="11"/><circle r="5"/></g><g transform="translate(272.1 253.5) rotate(-21) scale(1.28)"><rect x="-14" y="-10" width="28" height="20" rx="4"/><circle r="6"/><circle r="2.500"/><path d="M-6-10l2-4h8l2 4"/></g><g transform="translate(223.2 45.4) rotate(15) scale(1.26)"><path d="M-14-9h28a3 3 0 0 1 3 3v12a3 3 0 0 1-3 3H-2l-7 6v-6h-5a3 3 0 0 1-3-3V-6a3 3 0 0 1 3-3z"/><path d="M-10-3h18M-10 3h12"/></g><g transform="translate(35.3 352.3) rotate(11) scale(1.21)"><rect x="-14" y="-10" width="28" height="20" rx="4"/><circle r="6"/><circle r="2.500"/><path d="M-6-10l2-4h8l2 4"/></g><g transform="translate(164.9 270.0) rotate(29) scale(1.23)"><path d="M0 9C-7 3-10-1-10-5c0-3 2-5 5-5 2 0 4 1 5 3 1-2 3-3 5-3 3 0 5 2 5 5 0 4-3 8-10 14z"/></g><g transform="translate(360.2 51.7) rotate(27) scale(1.26)"><path d="M-14-9h28a3 3 0 0 1 3 3v12a3 3 0 0 1-3 3H-2l-7 6v-6h-5a3 3 0 0 1-3-3V-6a3 3 0 0 1 3-3z"/><path d="M-10-3h18M-10 3h12"/></g><g transform="translate(182.7 103.8) rotate(-27) scale(1.25)"><path d="M-10 8c3-3 3-6 3-10 0-5 3-8 7-8s7 3 7 8c0 4 0 7 3 10z"/><path d="M-3 8a3 3 0 0 0 6 0M0-10v-3"/></g><g transform="translate(35.5 111.5) rotate(19) scale(1.23)"><rect x="-22" y="-18" width="44" height="36" rx="4"/><circle r="12" cx="-3"/><circle r="4" cx="-3"/><path d="M15-12v14l-5 6"/></g><path d="M242.5 88.8L242.2 96.6L249.1 100.5L241.5 102.6L240.0 110.3L235.6 103.8L227.8 104.7L232.7 98.5L229.4 91.4L236.8 94.1z"/><path d="M303.8 188.1L305.1 196.6L311.6 202.3L303.1 203.6L297.4 210.1L296.1 201.6L289.6 195.9L298.1 194.6z"/><path d="M169.1 372.0L170.1 378.8L176.6 381.0L170.4 384.1L170.3 391.0L165.5 386.0L158.9 388.1L162.1 382.0L158.1 376.3L164.9 377.5z"/><path d="M360.8 363.9L361.7 371.8L369.2 374.7L361.9 378.0L361.5 386.0L356.1 380.1L348.3 382.2L352.3 375.2L347.9 368.5L355.8 370.1z"/><path d="M16.7 155.4L15.5 160.1L19.2 163.3L14.3 163.7L12.4 168.2L10.6 163.7L5.7 163.3L9.4 160.1L8.3 155.3L12.5 157.9z"/><path d="M48.4 23.0L46.6 28.6L48.8 34.2L43.1 32.3L37.6 34.5L39.4 28.8L37.2 23.3L42.9 25.2z"/><path d="M193.1 225.5L191.9 231.5L196.6 235.2L190.6 235.9L188.5 241.6L186.0 236.1L179.9 235.8L184.4 231.7L182.8 225.9L188.0 228.9z"/><path d="M379.8 182.7L379.7 190.1L384.4 195.8L377.0 195.7L371.3 200.4L371.3 193.0L366.6 187.3L374.0 187.4z"/><path d="M351.5 283.7L351.9 289.3L357.0 291.5L351.8 293.6L351.3 299.2L347.7 294.9L342.2 296.1L345.2 291.3L342.4 286.5L347.8 287.9z"/><path d="M367.5 114.1L365.2 118.9L368.5 123.2L363.2 122.5L360.2 126.9L359.2 121.6L354.0 120.1L358.7 117.5L358.6 112.2L362.5 115.9z"/><path d="M262.2 205.7L260.9 211.0L265.0 214.6L259.6 215.0L257.4 220.0L255.3 214.9L249.9 214.5L254.1 210.9L252.8 205.6L257.5 208.5z"/><path d="M13.9 189.7L14.7 195.4L20.1 197.3L14.9 199.8L14.8 205.5L10.9 201.3L5.4 203.0L8.1 197.9L4.8 193.2L10.5 194.3z"/><path d="M386.0 283.2L386.4 288.9L390.4 293.0L384.7 293.5L380.6 297.5L380.1 291.8L376.1 287.6L381.8 287.2z"/><path d="M102.7 372.2L104.7 379.7L112.3 381.4L105.8 385.6L106.6 393.4L100.5 388.4L93.4 391.6L96.2 384.3L91.0 378.5L98.8 378.9z"/><path d="M128.2 124.5L126.0 129.7L127.8 135.1L122.5 133.0L117.1 134.7L119.3 129.5L117.5 124.1L122.8 126.2z"/><path d="M189.4 23.7L186.4 28.6L187.2 34.4L182.2 31.4L176.4 32.2L179.5 27.2L178.6 21.4L183.6 24.5z"/><circle cx="298.0" cy="18.4" r="3.5"/><circle cx="34.8" cy="213.7" r="2.8"/><circle cx="204.6" cy="257.5" r="4.0"/><circle cx="178.2" cy="338.5" r="3.3"/><circle cx="304.0" cy="292.0" r="3.5"/><circle cx="378.2" cy="317.0" r="3.4"/><circle cx="232.1" cy="394.0" r="3.4"/><circle cx="261.9" cy="21.1" r="2.6"/><circle cx="281.9" cy="386.0" r="2.6"/><circle cx="332.4" cy="78.4" r="2.6"/><circle cx="11.9" cy="277.8" r="4.4"/><circle cx="350.2" cy="190.3" r="3.6"/><circle cx="366.9" cy="92.7" r="3.7"/><circle cx="392.2" cy="350.8" r="3.6"/><circle cx="304.8" cy="276.4" r="4.0"/><circle cx="331.2" cy="295.5" r="4.0"/><circle cx="246.0" cy="369.6" r="4.1"/><circle cx="153.1" cy="311.2" r="3.1"/><circle cx="213.8" cy="374.2" r="3.6"/><circle cx="169.8" cy="321.4" r="3.6"/><circle cx="54.1" cy="214.5" r="3.6"/><circle cx="370.0" cy="346.5" r="2.8"/><circle cx="24.0" cy="269.4" r="3.5"/><circle cx="159.6" cy="152.1" r="3.3"/><circle cx="42.1" cy="305.6" r="4.0"/><circle cx="270.3" cy="384.0" r="2.8"/><circle cx="9.2" cy="10.6" r="2.6"/><circle cx="359.7" cy="9.0" r="4.0"/><circle cx="108.7" cy="180.9" r="4.5"/><circle cx="395.8" cy="219.3" r="3.8"/><circle cx="154.8" cy="325.6" r="3.7"/><circle cx="218.3" cy="217.3" r="2.6"/><circle cx="394.5" cy="182.0" r="2.6"/><circle cx="63.0" cy="8.7" r="2.8"/><circle cx="6.4" cy="230.1" r="2.7"/><circle cx="199.7" cy="363.1" r="3.3"/><circle cx="271.6" cy="186.5" r="3.8"/><circle cx="337.4" cy="92.7" r="4.1"/><circle cx="146.2" cy="362.4" r="4.1"/><circle cx="365.3" cy="319.3" r="2.8"/><circle cx="123.1" cy="275.8" r="2.8"/><circle cx="394.3" cy="332.4" r="4.0"/><circle cx="223.3" cy="241.8" r="2.9"/><circle cx="265.9" cy="347.1" r="3.0"/><circle cx="337.4" cy="182.6" r="3.7"/><circle cx="280.3" cy="161.4" r="4.3"/><circle cx="78.9" cy="31.1" r="2.5"/><circle cx="266.9" cy="99.0" r="4.2"/><circle cx="75.3" cy="376.0" r="2.6"/><circle cx="390.4" cy="312.3" r="3.4"/><circle cx="271.1" cy="132.8" r="3.8"/><circle cx="390.4" cy="95.0" r="3.7"/><circle cx="103.3" cy="200.4" r="2.8"/><circle cx="362.6" cy="336.7" r="4.4"/><circle cx="58.4" cy="48.6" r="3.0"/><circle cx="128.6" cy="22.6" r="2.8"/><circle cx="337.9" cy="9.6" r="3.5"/><circle cx="230.2" cy="252.8" r="4.4"/><circle cx="75.0" cy="17.3" r="3.9"/><circle cx="266.9" cy="120.6" r="3.9"/><circle cx="388.2" cy="260.2" r="3.5"/><circle cx="139.1" cy="392.8" r="4.0"/><circle cx="11.9" cy="177.5" r="4.3"/><circle cx="159.5" cy="5.5" r="3.5"/><circle cx="8.3" cy="315.9" r="3.2"/><circle cx="105.5" cy="152.7" r="3.9"/><circle cx="206.0" cy="235.4" r="4.3"/><circle cx="316.4" cy="284.9" r="3.9"/><circle cx="381.1" cy="130.9" r="3.7"/><circle cx="61.1" cy="64.9" r="3.9"/><circle cx="380.8" cy="155.2" r="4.5"/><circle cx="37.3" cy="266.0" r="3.1"/><circle cx="16.4" cy="303.1" r="3.2"/><circle cx="237.3" cy="7.8" r="2.6"/><circle cx="47.9" cy="228.6" r="4.3"/><circle cx="140.0" cy="376.9" r="3.1"/><circle cx="166.7" cy="21.6" r="4.4"/><circle cx="21.5" cy="61.0" r="3.9"/><circle cx="347.1" cy="313.0" r="4.1"/><circle cx="376.9" cy="117.4" r="2.9"/><circle cx="38.2" cy="279.5" r="2.7"/><circle cx="22.2" cy="286.5" r="4.0"/><circle cx="120.5" cy="162.3" r="4.4"/><circle cx="94.0" cy="21.7" r="4.0"/><circle cx="276.1" cy="297.8" r="4.1"/><circle cx="96.5" cy="132.6" r="3.7"/><circle cx="394.5" cy="121.3" r="3.2"/><circle cx="390.1" cy="170.7" r="2.7"/><circle cx="170.3" cy="49.8" r="4.1"/><circle cx="180.4" cy="11.3" r="4.4"/><circle cx="8.9" cy="23.5" r="3.3"/><circle cx="205.1" cy="11.6" r="2.5"/><circle cx="37.3" cy="63.3" r="3.4"/><circle cx="28.1" cy="316.5" r="2.5"/><circle cx="366.5" cy="165.5" r="3.1"/><circle cx="160.4" cy="60.1" r="2.7"/><circle cx="34.2" cy="42.1" r="3.3"/><circle cx="304.4" cy="393.8" r="2.6"/><circle cx="125.2" cy="392.0" r="3.0"/><circle cx="60.6" cy="306.1" r="3.1"/></g></pattern><linearGradient id="ddf" x1="0" y1="0" x2="0" y2="1"><stop offset="0" stop-color="#272727"/><stop offset=".3" stop-color="#262626" stop-opacity=".95"/><stop offset=".65" stop-color="#262626" stop-opacity=".55"/><stop offset="1" stop-color="#252525" stop-opacity="0"/></linearGradient></defs><rect width="775" height="861" fill="#252525"/><rect width="775" height="861" fill="url(#dd)"/><rect y="100" width="775" height="250" fill="url(#ddf)"/></svg>
<div id="hdr">
<div class="av" style="left:22.500px;top:45px"><svg viewBox="0 0 48 48"><rect width="48" height="48" fill="#a7c2c0"/><g filter="url(#fa)"><rect y="22" width="48" height="26" fill="#6f9190"/><rect y="30" width="48" height="18" fill="#5d7d7c"/><path d="M0 30c6-3 8-6 9-12C11 10 16 6 23 6c8 0 13 7 15 14l-6 20-12 8H0z" fill="#a2aca9"/><path d="M2 34c4-2 8-2 10 0l4 14H0z" fill="#b5bfbd"/><path d="M22 11c5-1 10 3 12 9 2 5 2 10 0 14l-8-2-4-10c-1-4-1-8 0-11z" fill="#33241e"/><ellipse cx="25.500" cy="24" rx="6.500" ry="8" fill="#dcb7a2"/><path d="M22 48l2-12c2-3 8-5 11-3v5l-7 2-1 8z" fill="#d5ae9a"/><path d="M14 40c2-1 6-1 8 1l-1 7h-8z" fill="#3d4f4c"/></g></svg></div>
<div class="nm" style="left:88px;top:47px"><span style="letter-spacing:0.726px">Alice Whitman</span></div>
<div class="abs" style="left:88px;top:74px;font-size:16px;line-height:22px;color:#a8a8a8"><span style="letter-spacing:0.483px">online</span></div>

<svg class="abs" style="left:631px;top:12.600px" width="14" height="12" viewBox="0 0 14 12" stroke="#dcdcdc" stroke-width="1" fill="none"><path d="M1 6h11.500"/></svg>
<svg class="abs" style="left:686.300px;top:12px" width="14" height="14" viewBox="0 0 14 14" stroke="#e6e6e6" stroke-width="1.200" fill="none"><rect x="1.200" y="1.700" width="11.200" height="10.600" rx="2"/></svg>
<svg class="abs" style="left:741.100px;top:13px" width="14" height="14" viewBox="0 0 14 14" stroke="#e6e6e6" stroke-width="1.200" fill="none" stroke-linecap="round"><path d="M1.500 1.500l11 11M12.500 1.500l-11 11"/></svg>

<svg class="abs" style="left:583.500px;top:59px" width="20" height="22" viewBox="0 0 20 22" fill="none" stroke="#f2f2f2" stroke-width="1.350" stroke-linecap="round" stroke-linejoin="round"><path d="M5.300 1.700l1.300-.4c1-.3 2 .2 2.500 1.200l.9 2.200c.4.900.2 1.900-.5 2.600L8 8.800c-.2.200-.3.500-.2.800.3 1.300 1 2.600 2.100 3.900 1 1.300 2.100 2.200 3.100 2.700.3.100.6.100.8-.1l1.700-1.200c.8-.5 1.800-.5 2.500.1l1.600 1.500c.8.700.9 1.900.3 2.800l-.7 1c-.9 1.200-2.500 1.700-3.900 1.100-3-1.200-5.700-3.600-8.100-7.100C4.800 10.800 3.600 7.400 3.700 4.100c0-1.100.7-2 1.600-2.400z" transform="translate(-1.600 -.5) scale(.93)"/></svg>
<svg class="abs" style="left:629px;top:59.500px" width="24" height="20" viewBox="0 0 24 20" fill="none" stroke="#f2f2f2" stroke-width="1.400" stroke-linejoin="round"><rect x="2.500" y="3.200" width="13.600" height="13.800" rx="3"/><path d="M16.100 8l4.600-2.900v10L16.100 12.200"/></svg>
<div class="abs" style="left:683.500px;top:57.500px;width:1px;height:24px;background:#484848"></div>
<svg class="abs" style="left:717px;top:58.800px" width="22" height="22" viewBox="0 0 22 22" fill="none" stroke="#f2f2f2" stroke-width="1.400" stroke-linecap="round"><circle cx="13.200" cy="9.300" r="6.100"/><path d="M8.800 13.700L3.600 18.900"/></svg>
</div>

<svg class="abs" style="left:751px;top:109px" width="10" height="12" viewBox="0 0 10 12"><path d="M0 0h8.300c.7 0 .9.600.5 1.100L1.500 10.600C.9 11.400 0 11 0 10z" fill="#045d4d"/></svg>
<div class="out" style="left:233px;top:109px;width:519px;height:42.500px;border-top-right-radius:0">
<div class="abs" style="left:12px;top:10.500px;font-size:16px;line-height:22px;white-space:nowrap"><span style="letter-spacing:0.23px">Here are all the files. Let me know once you’ve had a look.</span></div>
<div class="meta" style="left:461px;top:25px">14:03</div><svg class="abs" style="left:493.500px;top:25.500px" width="16" height="11" viewBox="0 0 16 11" fill="none" stroke="#56b9df" stroke-width="1.100" stroke-linecap="round" stroke-linejoin="round"><path d="M1 6.300l2.400 3L10.200 1M5.900 7.800l1.300 1.500L14.100 1"/></svg>
</div>

<div class="out" style="left:353px;top:161px;width:399px;height:173px">
<div class="abs" style="left:11.500px;top:12px;width:375.500px;height:134px;border-radius:5px;background:#1a7060;overflow:hidden">
<div class="abs" style="left:0;top:0;width:100%;height:66px;background:#1d7363;border-bottom:1px solid #176959"></div>
<div class="abs" style="left:14.500px;top:83px;width:170px;height:37px;border-radius:4px;background:#0f6252;box-shadow:0 1px 0 #0c5848;text-align:center;font-size:16px;line-height:37px;color:#f0fbf8"><span style="letter-spacing:0.09px">Open</span></div>
<div class="abs" style="left:191.500px;top:83px;width:168.500px;height:37px;border-radius:4px;background:#0f6252;box-shadow:0 1px 0 #0c5848;text-align:center;font-size:16px;line-height:37px;color:#f0fbf8"><span style="letter-spacing:-0.366px">Save as...</span></div>
<svg class="abs" style="left:19px;top:15px" width="30" height="37" viewBox="0 0 30 37"><path d="M1 1.500h25v20.300l2.600 0V36H1z" fill="#f6dc82"/><path d="M18.500 1.500H26v20.300h2.600V36H18.500z" fill="#f1d474"/><rect x="16.600" y="1.500" width="2.200" height="34.500" fill="#c9a748"/><rect x="15.800" y="1.500" width="3.800" height="8.500" rx=".8" fill="#d9d6c8"/><rect x="16.400" y="9" width="2.600" height="3.200" fill="#7a6a3a"/><path d="M1 34.800h27.600V36H1z" fill="#e6c660"/></svg>
<div class="abs" style="left:64.500px;top:10.500px;font-size:16.500px;line-height:22px;color:#f2fbf8;white-space:nowrap"><span style="letter-spacing:0.165px">All-files.zip</span></div>
<div class="abs" style="left:64.500px;top:34px;font-size:13.500px;line-height:20px;color:#b9d9d1;white-space:nowrap"><span style="letter-spacing:0.213px">23.5 MB · Compressed (zipped) Folder</span></div>
</div>
<div class="meta" style="left:341px;top:154px">14:04</div><svg class="abs" style="left:373.500px;top:154.500px" width="16" height="11" viewBox="0 0 16 11" fill="none" stroke="#56b9df" stroke-width="1.100" stroke-linecap="round" stroke-linejoin="round"><path d="M1 6.300l2.400 3L10.200 1M5.900 7.800l1.300 1.500L14.100 1"/></svg>
</div>

<div class="abs" style="left:358px;top:403px;width:62px;height:30px;border-radius:7px;background:#2b2b2b;text-align:center;font-size:14.500px;line-height:29px;color:#e2e2e2"><span style="letter-spacing:0.059px">Today</span></div>

<svg class="abs" style="left:15px;top:445px" width="10" height="12" viewBox="0 0 10 12"><path d="M10 0H1.700C1 0 .8.600 1.200 1.100L8.500 10.600c.6.800 1.500.4 1.500-.6z" fill="#363636"/></svg>
<div class="in" style="left:24px;top:445px;width:395px;height:290px;border-top-left-radius:0;box-shadow:0 1px 1px rgba(0,0,0,.25)">
<svg class="abs" style="left:7px;top:7px;border-radius:4px" width="382" height="244" viewBox="0 0 382 244" preserveAspectRatio="none">
<defs>
<linearGradient id="sky" x1="0" y1="0" x2="0" y2="1"><stop offset="0" stop-color="#5688d6"/><stop offset=".35" stop-color="#6e9fe2"/><stop offset=".65" stop-color="#93b9ec"/><stop offset=".9" stop-color="#bdd1ef"/><stop offset="1" stop-color="#c4d3e9"/></linearGradient>
<linearGradient id="mtn" x1="0" y1="0" x2="0" y2="1"><stop offset="0" stop-color="#506c8b"/><stop offset=".2" stop-color="#425a7a"/><stop offset=".55" stop-color="#344a66"/><stop offset="1" stop-color="#2b3f55"/></linearGradient>
<linearGradient id="sea" x1="0" y1="0" x2="0" y2="1"><stop offset="0" stop-color="#86a3c4"/><stop offset=".07" stop-color="#6c8aab"/><stop offset=".16" stop-color="#526e8d"/><stop offset=".35" stop-color="#3b5371"/><stop offset=".7" stop-color="#2f445e"/><stop offset="1" stop-color="#2a3d53"/></linearGradient>
<filter id="pbm" x="0" y="0" width="100%" height="100%"><feTurbulence type="fractalNoise" baseFrequency=".03 .09" numOctaves="3" seed="11"/><feColorMatrix values="0 0 0 0 .08  0 0 0 0 .13  0 0 0 0 .25  1.300 1.300 0 0 -1.100"/><feGaussianBlur stdDeviation="1"/></filter>
<linearGradient id="grs" x1="0" y1="0" x2="0" y2="1"><stop offset="0" stop-color="#958852"/><stop offset=".5" stop-color="#85794a"/><stop offset="1" stop-color="#7b7044"/></linearGradient>
<radialGradient id="skl" cx=".1" cy=".9" r=".9"><stop offset="0" stop-color="#d4deee" stop-opacity=".55"/><stop offset="1" stop-color="#d4deee" stop-opacity="0"/></radialGradient>
<filter id="pb1" x="-5%" y="-5%" width="110%" height="110%"><feGaussianBlur stdDeviation="1.700"/></filter>
<filter id="pb2" x="-5%" y="-5%" width="110%" height="110%"><feGaussianBlur stdDeviation=".7"/></filter>
<filter id="pb3" x="-8%" y="-8%" width="116%" height="116%"><feGaussianBlur stdDeviation="3.500"/></filter>
<filter id="pbn" x="0" y="0" width="100%" height="100%"><feTurbulence type="fractalNoise" baseFrequency=".18 .32" numOctaves="3" seed="4"/><feColorMatrix values="0 0 0 0 .22  0 0 0 0 .2  0 0 0 0 .09  1.200 1.200 1.200 0 -1.500"/><feGaussianBlur stdDeviation=".5"/></filter>
<filter id="pbw" x="0" y="0" width="100%" height="100%"><feTurbulence type="fractalNoise" baseFrequency=".2 .3" numOctaves="2" seed="9"/><feColorMatrix values="0 0 0 0 .78  0 0 0 0 .72  0 0 0 0 .48  1.400 1.400 1.400 0 -2.150"/><feGaussianBlur stdDeviation=".5"/></filter>
<clipPath id="gclip"><path d="M-3.0 194.9L28.3 179.3L75.1 167.6L153.3 159.8L163.7 152.0L184.5 150.7L205.3 153.3L231.4 153.3L260.0 122.0L283.5 127.2L335.5 145.4L385.0 154.6L385.0 247.0L-3.0 247.0"/></clipPath>
</defs>
<rect width="382" height="92" fill="url(#sky)"/><rect width="382" height="92" fill="url(#skl)"/>
<rect y="84" width="382" height="160" fill="url(#sea)"/>
<rect filter="url(#pb3)" x="-10" y="78" width="402" height="14" fill="#c6d3e6" opacity=".75"/>
<path filter="url(#pb1)" d="M296.5 101.2L317.3 88.7L335.5 82.4L361.6 81.9L385.0 80.9L385.0 111.6L322.5 111.6z" fill="#6c8bb4" opacity="0.9" />
<path filter="url(#pb1)" d="M-3.0 88.7L75.1 87.9L179.3 87.1L205.3 88.7L257.4 92.8L296.5 99.1L296.5 106.4L-3.0 101.2z" fill="#7593bb" opacity="0.55" />
<path filter="url(#pb1)" d="M-3.0 106.4L36.1 103.3L75.1 101.2L122.0 99.1L166.3 100.7L205.3 107.7L236.6 117.3L226.2 132.4L179.3 153.3L127.2 163.7L-3.0 200.1z" fill="url(#mtn)" />
<path filter="url(#pb3)" d="M-3.0 111.6L49.1 107.7L106.4 105.9L142.8 111.6L163.7 127.2L153.3 148.0L75.1 168.9L-3.0 197.5z" fill="#2f4462" opacity="0.5" />
<path filter="url(#pb3)" d="M163.7 119.4L200.1 111.6L231.4 118.1L223.6 137.6L194.9 150.7L163.7 153.3L153.3 142.8z" fill="#5d7b94" opacity="0.6" />
<path filter="url(#pb3)" d="M179.3 132.4L205.3 128.5L210.5 137.6L189.7 146.7L168.9 148.0z" fill="#7f9c98" opacity="0.4" />
<rect y="100" width="260" height="100" filter="url(#pbm)" opacity=".55"/>
<path filter="url(#pb2)" d="M283.5 114.2L309.5 101.2L332.9 93.9L348.6 96.0L366.8 103.8L385.0 107.7L385.0 119.4L283.5 119.4z" fill="#a3966a" />
<path filter="url(#pb2)" d="M288.7 113.7L332.9 96.0L335.5 99.9L304.3 112.9z" fill="#b5a878" opacity="0.7" />
<path filter="url(#pb2)" d="M226.2 153.3L257.4 119.4L283.5 122.0L335.5 142.8L385.0 153.3L385.0 168.9L231.4 163.7z" fill="#8d8552" />
<path filter="url(#pb2)" d="M262.6 119.4L283.5 113.7L322.5 110.3L361.6 107.7L385.0 109.0L385.0 153.8L356.4 150.7L322.5 142.8L301.7 133.7L278.3 125.9z" fill="#243222" />
<path filter="url(#pb1)" d="M296.5 116.8L335.5 112.9L385.0 114.2L385.0 132.4L335.5 129.8z" fill="#2f4229" opacity="0.8" />
<path filter="url(#pb2)" d="M202.7 150.7L218.4 138.9L231.4 122.0L239.2 118.1L247.0 153.3z" fill="#4f5f3d" />
<path filter="url(#pb2)" d="M226.2 153.3L232.7 128.5L239.2 118.1L250.9 120.7L258.7 132.4L254.8 148.0L247.0 154.6z" fill="#c4c3ba" />
<path filter="url(#pb2)" d="M237.9 124.6L232.7 153.3M244.4 124.6L240.5 154.6M250.9 127.2L248.3 153.3" stroke="#7f8078" stroke-width="1.600" fill="none"/>
<path filter="url(#pb2)" d="M279.6 150.7L286.1 146.7L299.1 149.3L303.0 157.2L280.9 157.9z" fill="#b9b7ac" />
<path filter="url(#pb2)" d="M-3.0 194.9L28.3 179.3L75.1 167.6L153.3 159.8L163.7 152.0L184.5 150.7L205.3 153.3L231.4 153.3L257.4 154.6L283.5 158.5L335.5 158.5L385.0 163.7L385.0 247.0L-3.0 247.0z" fill="url(#grs)" />
<path filter="url(#pb1)" d="M-3.0 194.9L28.3 179.3L75.1 167.6L106.4 166.3L75.1 184.5L-3.0 221.0z" fill="#a89a62" opacity="0.8" />
<path filter="url(#pb1)" d="M309.5 163.7L385.0 166.3L385.0 231.4L348.6 194.9z" fill="#9a8c50" opacity="0.8" />
<path filter="url(#pb2)" d="M158.5 153.3L166.3 150.1L184.5 150.1L188.4 157.2L163.7 159.8z" fill="#6f6c3e" opacity="0.9" />
<path filter="url(#pb1)" d="M25.7 184.5L75.1 174.1L82.9 179.3L49.1 189.7z" fill="#5a5630" opacity="0.6" />
<path filter="url(#pb1)" d="M69.9 207.9L96.0 205.3L101.2 213.2L75.1 217.1z" fill="#5a5630" opacity="0.6" />
<path filter="url(#pb1)" d="M158.5 179.3L179.3 176.7L184.5 183.2L163.7 185.8z" fill="#5a5630" opacity="0.6" />
<path filter="url(#pb1)" d="M205.3 194.9L231.4 179.3L241.8 184.5L221.0 202.7z" fill="#5a5630" opacity="0.6" />
<path filter="url(#pb1)" d="M163.7 228.8L189.7 226.2L189.7 241.8L166.3 243.1z" fill="#5a5630" opacity="0.6" />
<path filter="url(#pb1)" d="M-3.0 223.6L28.3 221.0L36.1 239.2L-3.0 243.1z" fill="#5a5630" opacity="0.6" />
<path filter="url(#pb1)" d="M257.4 179.3L293.9 179.3L299.1 189.7L260.0 191.0z" fill="#5a5630" opacity="0.6" />
<g clip-path="url(#gclip)"><rect y="140" width="382" height="104" filter="url(#pbn)"/><rect y="140" width="382" height="104" filter="url(#pbw)" opacity=".55"/></g>
<path filter="url(#pb1)" d="M243.1 179.3L243.9 189.7L248.3 202.7L257.4 215.8L267.8 231.4L283.5 245.7" stroke="#b9b29a" stroke-width="8" fill="none" stroke-linecap="butt" stroke-linejoin="round" opacity="0.5"/>
<path filter="url(#pb1)" d="M296.5 182.4L300.4 194.9L309.5 207.9L325.1 221.0L343.4 232.7L369.4 245.7" stroke="#b9b29a" stroke-width="8" fill="none" stroke-linecap="butt" stroke-linejoin="round" opacity="0.5"/>
<path filter="url(#pb2)" d="M243.1 179.3L243.9 189.7L248.3 202.7L257.4 215.8L267.8 231.4L283.5 245.7" stroke="#d2cdbb" stroke-width="4.2" fill="none" stroke-linecap="butt" stroke-linejoin="round" opacity="0.8"/>
<path filter="url(#pb2)" d="M243.1 179.3L243.9 189.7L248.3 202.7L257.4 215.8L267.8 231.4L283.5 245.7" stroke="#8a8460" stroke-width="1.2" fill="none" stroke-linecap="butt" stroke-linejoin="round" opacity="0.5" stroke-dasharray="1.500 6 1 9 2 7"/>
<path filter="url(#pb2)" d="M296.5 182.4L300.4 194.9L309.5 207.9L325.1 221.0L343.4 232.7L369.4 245.7" stroke="#d4cfbd" stroke-width="4.4" fill="none" stroke-linecap="butt" stroke-linejoin="round" opacity="0.8"/>
<path filter="url(#pb2)" d="M296.5 182.4L300.4 194.9L309.5 207.9L325.1 221.0L343.4 232.7L369.4 245.7" stroke="#8a8460" stroke-width="1.2" fill="none" stroke-linecap="butt" stroke-linejoin="round" opacity="0.5" stroke-dasharray="1 7 2 5 1.500 8"/>
<path filter="url(#pb1)" d="M267.8 179.3L274.3 200.1L288.7 221.0L306.9 244.4" stroke="#615e36" stroke-width="7" fill="none" stroke-linecap="butt" stroke-linejoin="round" opacity="0.5"/>
<path filter="url(#pb1)" d="M231.4 179.3L232.7 194.9L239.2 213.2L252.2 236.6" stroke="#615e36" stroke-width="5" fill="none" stroke-linecap="butt" stroke-linejoin="round" opacity="0.4"/>
<path filter="url(#pb2)" d="M346.0 163.7L356.4 159.8L361.6 163.7" stroke="#c5bfa8" stroke-width="2" fill="none" stroke-linecap="butt" stroke-linejoin="round" opacity="0.8"/>
<g filter="url(#pb2)" fill="#dcdad0" opacity=".9"><ellipse cx="84.6" cy="235.8" rx="2.0" ry="1.5" transform="rotate(10 84.6 235.8)"/><ellipse cx="92.7" cy="236.4" rx="3.2" ry="1.3" transform="rotate(5 92.7 236.4)"/><ellipse cx="84.5" cy="240.5" rx="2.2" ry="1.7" transform="rotate(0 84.5 240.5)"/><ellipse cx="88.3" cy="239.1" rx="1.7" ry="1.0" transform="rotate(29 88.3 239.1)"/><ellipse cx="91.3" cy="237.8" rx="2.7" ry="0.9" transform="rotate(18 91.3 237.8)"/><ellipse cx="101.5" cy="230.5" rx="2.9" ry="1.7" transform="rotate(-13 101.5 230.5)"/><ellipse cx="90.1" cy="237.6" rx="3.1" ry="1.6" transform="rotate(28 90.1 237.6)"/><ellipse cx="89.0" cy="237.7" rx="2.5" ry="1.9" transform="rotate(-22 89.0 237.7)"/><ellipse cx="99.6" cy="231.0" rx="1.5" ry="1.0" transform="rotate(13 99.6 231.0)"/></g>
<g filter="url(#pb2)" fill="#dcdad0" opacity=".9"><ellipse cx="137.1" cy="230.4" rx="1.9" ry="1.4" transform="rotate(-6 137.1 230.4)"/><ellipse cx="141.1" cy="229.2" rx="2.1" ry="1.1" transform="rotate(-9 141.1 229.2)"/><ellipse cx="144.1" cy="234.3" rx="3.1" ry="1.9" transform="rotate(12 144.1 234.3)"/><ellipse cx="144.5" cy="231.3" rx="1.9" ry="1.4" transform="rotate(6 144.5 231.3)"/><ellipse cx="140.9" cy="231.5" rx="1.7" ry="1.7" transform="rotate(6 140.9 231.5)"/><ellipse cx="132.3" cy="223.9" rx="2.3" ry="1.5" transform="rotate(0 132.3 223.9)"/><ellipse cx="127.1" cy="232.7" rx="2.1" ry="1.0" transform="rotate(-12 127.1 232.7)"/><ellipse cx="136.8" cy="227.7" rx="1.5" ry="1.5" transform="rotate(18 136.8 227.7)"/><ellipse cx="125.9" cy="231.6" rx="1.9" ry="1.8" transform="rotate(-13 125.9 231.6)"/><ellipse cx="139.1" cy="235.2" rx="1.9" ry="0.9" transform="rotate(8 139.1 235.2)"/></g>
<g filter="url(#pb2)" fill="#dcdad0" opacity=".9"><ellipse cx="158.9" cy="215.5" rx="3.3" ry="1.1" transform="rotate(-14 158.9 215.5)"/><ellipse cx="154.5" cy="210.8" rx="3.1" ry="1.1" transform="rotate(-22 154.5 210.8)"/><ellipse cx="163.0" cy="212.5" rx="2.2" ry="1.4" transform="rotate(11 163.0 212.5)"/><ellipse cx="162.7" cy="214.1" rx="1.4" ry="1.9" transform="rotate(21 162.7 214.1)"/></g>
<g filter="url(#pb2)" fill="#dcdad0" opacity=".9"><ellipse cx="187.2" cy="194.5" rx="2.8" ry="1.1" transform="rotate(-11 187.2 194.5)"/><ellipse cx="186.3" cy="193.5" rx="1.9" ry="1.2" transform="rotate(20 186.3 193.5)"/><ellipse cx="186.0" cy="195.4" rx="1.2" ry="1.5" transform="rotate(10 186.0 195.4)"/></g>
<g filter="url(#pb2)" fill="#dcdad0" opacity=".9"><ellipse cx="302.1" cy="235.3" rx="1.9" ry="1.2" transform="rotate(28 302.1 235.3)"/><ellipse cx="305.0" cy="235.7" rx="2.8" ry="0.8" transform="rotate(-27 305.0 235.7)"/><ellipse cx="312.8" cy="231.7" rx="2.0" ry="1.5" transform="rotate(-11 312.8 231.7)"/><ellipse cx="308.1" cy="233.5" rx="2.0" ry="1.1" transform="rotate(-7 308.1 233.5)"/></g>
<g filter="url(#pb2)" fill="#dcdad0" opacity=".9"><ellipse cx="206.3" cy="235.0" rx="2.9" ry="0.9" transform="rotate(22 206.3 235.0)"/><ellipse cx="197.8" cy="236.4" rx="2.8" ry="1.1" transform="rotate(-16 197.8 236.4)"/><ellipse cx="204.3" cy="235.0" rx="1.9" ry="1.5" transform="rotate(11 204.3 235.0)"/></g>
<g filter="url(#pb2)" fill="#dcdad0" opacity=".9"><ellipse cx="372.0" cy="226.7" rx="1.9" ry="1.2" transform="rotate(23 372.0 226.7)"/><ellipse cx="359.6" cy="235.0" rx="3.3" ry="0.9" transform="rotate(17 359.6 235.0)"/><ellipse cx="370.7" cy="235.9" rx="2.2" ry="1.0" transform="rotate(-23 370.7 235.9)"/><ellipse cx="354.7" cy="236.7" rx="1.9" ry="1.7" transform="rotate(6 354.7 236.7)"/><ellipse cx="358.6" cy="228.8" rx="3.0" ry="1.5" transform="rotate(21 358.6 228.8)"/><ellipse cx="369.9" cy="232.4" rx="2.1" ry="1.4" transform="rotate(24 369.9 232.4)"/></g>
<g filter="url(#pb2)" fill="#dcdad0" opacity=".9"><ellipse cx="252.7" cy="222.1" rx="2.1" ry="1.3" transform="rotate(-4 252.7 222.1)"/><ellipse cx="247.7" cy="222.8" rx="1.6" ry="1.3" transform="rotate(23 247.7 222.8)"/><ellipse cx="265.3" cy="228.1" rx="2.2" ry="1.8" transform="rotate(29 265.3 228.1)"/><ellipse cx="261.9" cy="219.2" rx="2.2" ry="1.6" transform="rotate(17 261.9 219.2)"/><ellipse cx="257.8" cy="221.6" rx="2.0" ry="1.1" transform="rotate(-26 257.8 221.6)"/></g>
<g filter="url(#pb2)" fill="#dcdad0" opacity=".9"><ellipse cx="331.8" cy="223.9" rx="1.5" ry="1.1" transform="rotate(-28 331.8 223.9)"/><ellipse cx="333.0" cy="220.6" rx="3.2" ry="1.8" transform="rotate(27 333.0 220.6)"/><ellipse cx="320.7" cy="213.1" rx="2.3" ry="0.9" transform="rotate(2 320.7 213.1)"/><ellipse cx="317.3" cy="220.3" rx="2.4" ry="1.3" transform="rotate(30 317.3 220.3)"/><ellipse cx="333.3" cy="213.8" rx="1.5" ry="1.9" transform="rotate(4 333.3 213.8)"/><ellipse cx="321.9" cy="221.7" rx="2.0" ry="1.0" transform="rotate(4 321.9 221.7)"/></g>
<path filter="url(#pb2)" d="M132.4 222.5L141.8 223.6L139.7 228.3L131.4 227.2z" fill="#45453f" opacity="0.8" />
<g filter="url(#pb2)" fill="#fff"><ellipse cx="21.7" cy="51.2" rx="2.6" ry="2.1" opacity="0.85"/><ellipse cx="36.1" cy="52.2" rx="7.3" ry="3.6" opacity="0.9"/><ellipse cx="58.2" cy="52.2" rx="8.9" ry="5.2" opacity="1"/><ellipse cx="67.3" cy="53.8" rx="4.2" ry="2.6" opacity="0.85"/><ellipse cx="12.6" cy="63.4" rx="10.4" ry="1.6" opacity="0.35"/><ellipse cx="343.4" cy="60.8" rx="13.0" ry="7.3" opacity="1"/><ellipse cx="359.0" cy="59.5" rx="10.4" ry="6.2" opacity="1"/><ellipse cx="332.9" cy="65.2" rx="7.8" ry="3.1" opacity="0.9"/><ellipse cx="313.4" cy="67.8" rx="7.8" ry="3.6" opacity="0.8"/><ellipse cx="286.1" cy="72.5" rx="3.6" ry="2.3" opacity="0.8"/><ellipse cx="372.0" cy="73.0" rx="8.9" ry="4.2" opacity="0.6"/><ellipse cx="325.1" cy="73.0" rx="7.8" ry="2.1" opacity="0.5"/></g>
<ellipse filter="url(#pb2)" cx="351.2" cy="65.2" rx="12" ry="3" fill="#e9c6c6" opacity=".5"/>
</svg>
<div class="abs" style="left:11px;top:259.500px;font-size:16px;line-height:22px;white-space:nowrap"><span style="letter-spacing:0.354px">So beautiful here!</span></div>
<div class="meta" style="left:355.500px;top:273px;color:#b4b4b4">15:06</div>
</div>
<div class="abs" style="left:35px;top:728px;width:39px;height:30px;border-radius:15px;background:#343434;border:1px solid #242424"><svg class="abs" style="left:10px;top:7px" width="18" height="16" viewBox="0 0 18 16"><defs><linearGradient id="hg" x1="0" y1="0" x2="0" y2="1"><stop offset="0" stop-color="#ff5a4e"/><stop offset="1" stop-color="#d92b2b"/></linearGradient></defs><path d="M9 15.300C3.500 11 .7 8.200.7 4.900.7 2.500 2.500.8 4.700.8 6.400.8 8 1.700 9 3.400 10 1.700 11.600.8 13.300.8c2.200 0 4 1.700 4 4.100 0 3.300-2.800 6.100-8.300 10.400z" fill="url(#hg)"/><ellipse cx="5" cy="4.300" rx="1.800" ry="1.300" fill="#ff9c90" opacity=".7"/></svg></div>

<svg class="abs" style="left:751px;top:749px" width="10" height="12" viewBox="0 0 10 12"><path d="M0 0h8.300c.7 0 .9.600.5 1.100L1.500 10.600C.9 11.400 0 11 0 10z" fill="#045d4d"/></svg>
<div class="out" style="left:444px;top:749px;width:308px;height:42.500px;border-top-right-radius:0">
<div class="abs" style="left:13px;top:10.500px;font-size:16px;line-height:22px;white-space:nowrap"><span style="letter-spacing:0.251px">Wow! Have great time. Enjoy.</span></div>
<div class="meta" style="left:250px;top:25px">15:12</div><svg class="abs" style="left:282.500px;top:25.500px" width="16" height="11" viewBox="0 0 16 11" fill="none" stroke="#56b9df" stroke-width="1.100" stroke-linecap="round" stroke-linejoin="round"><path d="M1 6.300l2.400 3L10.200 1M5.900 7.800l1.300 1.500L14.100 1"/></svg>
</div>

<div id="comp">
<svg class="abs" style="left:35.600px;top:17.300px" width="23.200" height="23.200" viewBox="0 0 24 24" fill="none" stroke="#ededed" stroke-width="1.350" stroke-linecap="round"><circle cx="12" cy="12" r="9.300"/><circle cx="8.800" cy="9.600" r=".9" fill="#ededed" stroke="none"/><circle cx="15.200" cy="9.600" r=".9" fill="#ededed" stroke="none"/><path d="M7.800 14.200c1.900 2.800 6.500 2.800 8.400 0"/></svg>
<svg class="abs" style="left:83px;top:16px" width="24" height="25" viewBox="0 0 24 24" fill="none" stroke="#ededed" stroke-width="1.350" stroke-linecap="round" stroke-linejoin="round"><path d="M9.400 14.800l6.300-6.300a1.900 1.900 0 0 0-2.700-2.700l-7.500 7.500a3.600 3.600 0 0 0 5.100 5.100l8.100-8.100a4.700 4.700 0 0 0 0-5.600" transform="translate(1 1.500) scale(.92)"/></svg>
<div class="abs" style="left:145px;top:18.500px;font-size:16px;line-height:22px;color:#9c9c9c"><span style="letter-spacing:0.042px">Type a message</span></div>
<svg class="abs" style="left:717.800px;top:17.300px" width="20.200" height="24" viewBox="0 0 22 26" fill="none" stroke="#ededed" stroke-width="1.400" stroke-linecap="round"><rect x="7.300" y="2.300" width="7.400" height="13" rx="3.700"/><path d="M4 11.700c0 4 3.100 7 7 7s7-3 7-7M11 18.700v4.200"/></svg>
</div>
</div>

</div>
</body>
</html>
